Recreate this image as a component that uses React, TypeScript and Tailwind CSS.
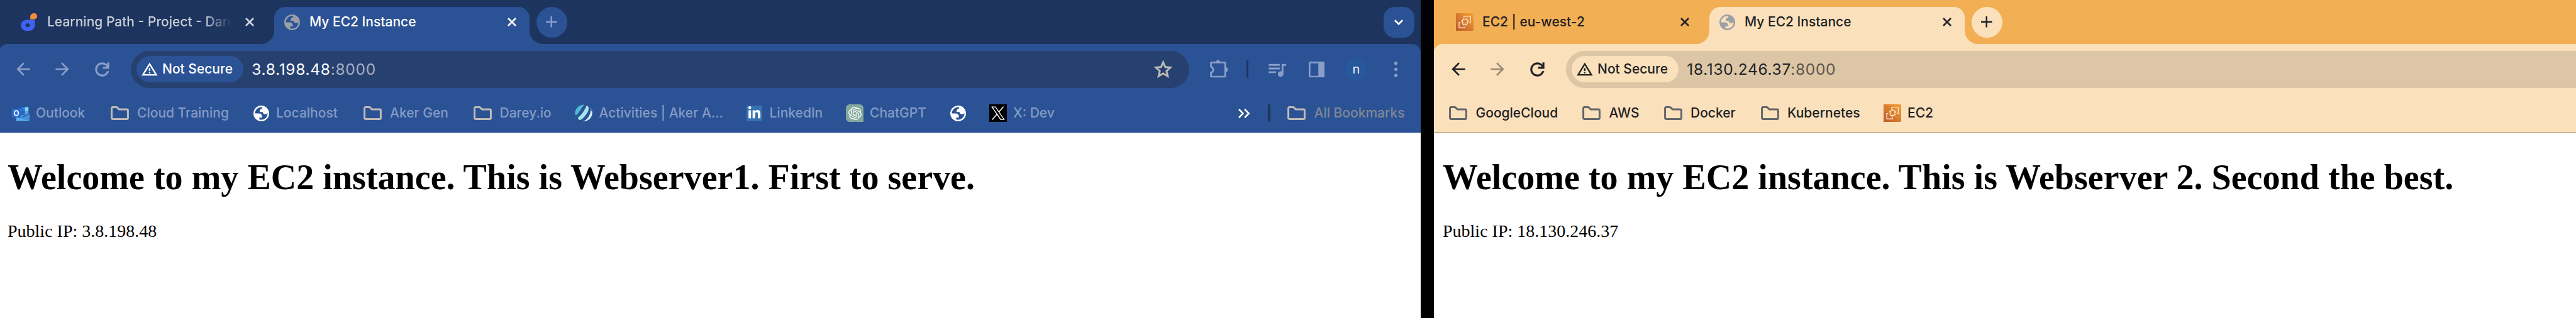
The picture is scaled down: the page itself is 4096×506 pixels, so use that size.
import type { ReactNode } from "react";
import { SiOpenai } from "react-icons/si";
import { FaLinkedinIn } from "react-icons/fa6";

type Theme = {
  strip: string;
  bar: string;
  barText: string;
  field: string;
  line: string;
  tabText: string;
  idleTabText: string;
  idleIcon: string;
  navIcon: string;
  forwardIcon: string;
  plusIcon: string;
  port: string;
  bookmark: string;
  folder: string;
  favicon: string;
};

const blue: Theme = {
  strip: "bg-[#1d345e]",
  bar: "bg-[#2b5295]",
  barText: "text-[#2b5295]",
  field: "bg-[#264170]",
  line: "bg-[#5a78ae]",
  tabText: "text-white",
  idleTabText: "text-[#c8ced8]",
  idleIcon: "text-[#d0d5dd]",
  navIcon: "text-[#899fc8]",
  forwardIcon: "text-[#899fc8]",
  plusIcon: "text-[#899fc8]",
  port: "text-[#a6b0c3]",
  bookmark: "text-[#849bc5]",
  folder: "text-[#bfbbb6]",
  favicon: "text-[#9aa0a6]",
};

const orange: Theme = {
  strip: "bg-[#f2af54]",
  bar: "bg-[#fae0bb]",
  barText: "text-[#fae0bb]",
  field: "bg-[#dcc6a6]",
  line: "bg-[#c6b292]",
  tabText: "text-[#202124]",
  idleTabText: "text-[#202124]",
  idleIcon: "text-[#202124]",
  navIcon: "text-[#202124]",
  forwardIcon: "text-[#9b8c76]",
  plusIcon: "text-[#202124]",
  port: "text-[#5c544b]",
  bookmark: "text-[#202124]",
  folder: "text-[#64666a]",
  favicon: "text-[#9aa0a6]",
};

function Close() {
  return (
    <svg viewBox="0 0 16 16" className="block h-[14px] w-[14px] shrink-0" fill="none" stroke="currentColor" strokeWidth="3">
      <path d="M1.1 1.1 14.9 14.9M14.9 1.1 1.1 14.9" />
    </svg>
  );
}

function Globe({ className }: { className: string }) {
  return (
    <svg viewBox="2 2 20 20" className={`block shrink-0 ${className}`} fill="currentColor">
      <path
        fillRule="evenodd"
        d="M12 2C6.48 2 2 6.48 2 12s4.48 10 10 10 10-4.48 10-10S17.52 2 12 2zM4 12h4.4c3.407.022 4.922 1.73 4.543 5.127H9.488v2.47a8.004 8.004 0 0 0 10.498-8.083C19.327 12.504 18.332 13 17 13c-2.137 0-3.206-.916-3.206-2.75h-3.748c-.274-2.728.683-4.092 2.87-4.092 0-.975.327-1.597.811-1.97A8.004 8.004 0 0 0 4 12z"
      />
    </svg>
  );
}

function Folder() {
  return (
    <svg viewBox="0 0 33 25" className="block h-[22px] w-[29px] shrink-0" fill="none" stroke="currentColor" strokeWidth="3.4" strokeLinejoin="round">
      <path d="M1.8 3.6Q1.8 1.8 3.6 1.8H11.2L15.4 5.8H29.4Q31.2 5.8 31.2 7.6V21.4Q31.2 23.2 29.4 23.2H3.6Q1.8 23.2 1.8 21.4Z" />
    </svg>
  );
}

function DareyLogo() {
  return (
    <svg viewBox="0 0 32 32" className="block h-[28px] w-[28px] shrink-0">
      <path d="M17.3 11V6.2A6.4 6.2 0 0 1 24 0h.6a6.4 5.6 0 0 1 0 11Z" fill="#f08c3c" />
      <path
        fillRule="evenodd"
        fill="#3e63f0"
        d="M25.6 12V22.5A10 9.5 0 0 1 15.6 32H10.5A10.4 10.1 0 0 1 .2 22 10.4 10.1 0 0 1 10.5 12ZM12.7 18.6a4.2 3.4 0 1 0 .01 0Z"
      />
    </svg>
  );
}

function OutlookLogo() {
  return (
    <svg viewBox="0 0 32 32" className="block h-[28px] w-[28px] shrink-0">
      <path d="M9 5H16.5V12H9Z" fill="#2058b4" />
      <path d="M16.5 5H23.5V12H16.5Z" fill="#3676d4" />
      <path d="M23.5 5H30V12H23.5Z" fill="#7fdafd" />
      <path d="M16.5 12H23.5V19H16.5Z" fill="#2f66c4" />
      <path d="M23.5 12H30V19H23.5Z" fill="#57a9ea" />
      <path d="M16 19H30L32 15.5V30H8V24Z" fill="#4690dc" />
      <path d="M8 24V30H32Z" fill="#5fb2ea" />
      <path d="M19 22.5 32 15.5V17L21.5 23.5Z" fill="#2a5aa6" />
      <rect x="0" y="8" width="16.2" height="16.2" rx="1" fill="#2a6fd0" />
      <ellipse cx="8" cy="16" rx="3.6" ry="4.4" fill="none" stroke="#fff" strokeWidth="2.2" />
    </svg>
  );
}

function ActivitiesLogo() {
  return (
    <svg viewBox="0 0 32 32" className="block h-[28px] w-[28px] shrink-0">
      <path d="M17 .2 3.2 20.6Q1.3 21 .4 18.4C-.9 8.6 7.5.6 17 .2Z" fill="#4fb9d2" />
      <path d="M.9 19.8 5.6 17 8.5 20.5 3.2 22.3Z" fill="#216a86" />
      <path d="M21.8 2C25.6 3.6 26.2 8.6 23.4 14 20.6 19.4 14 27.2 9.8 28.6 7.8 28.8 5.8 27.4 5.6 24.6 8 22.6 10.3 20.6 13.5 16.4 17 11.8 18.6 7.6 21.8 2Z" fill="#a9e3ec" />
      <path d="M27.5 4.8C32 9.5 33.4 17 29.4 23.4 26.4 28.2 20.5 31.6 14.8 31 19.5 29.8 23.6 25.8 26.4 20.4 29 15.4 29.4 9.8 27.5 4.8Z" fill="#d3f3f6" />
      <path d="M25.2 2.8C28.6 5 30.6 8.5 31 12.5L29.2 12C29 8.8 27.6 5.2 25.2 2.8Z" fill="#1f5f8d" />
    </svg>
  );
}

function XLogo() {
  return (
    <svg viewBox="0 0 32 32" className="block h-[28px] w-[28px] shrink-0">
      <rect width="32" height="32" fill="#000" />
      <path d="M5 4.8H11.2L26.8 27.4H20.6Z" fill="none" stroke="#fff" strokeWidth="1.5" />
      <path d="M25.8 4.2 17.4 14M5.2 28 14.2 17.7" fill="none" stroke="#fff" strokeWidth="1.7" />
    </svg>
  );
}

function Ec2Logo({ id }: { id: string }) {
  return (
    <svg viewBox="0 0 32 32" className="block h-[28px] w-[28px] shrink-0">
      <defs>
        <linearGradient id={id} x1="0" y1="1" x2="1" y2="0">
          <stop offset="0" stopColor="#bf592a" />
          <stop offset="1" stopColor="#f4a135" />
        </linearGradient>
      </defs>
      <rect width="32" height="32" fill={`url(#${id})`} />
      <g fill="none" stroke="#fdf1e2" strokeWidth="1.3">
        <path d="M14.7 8V5.7H26.6V16.6H24.4M8.2 16.6H5.7V26.4H16.5V23.4" />
        <rect x="12.4" y="11.4" width="8.2" height="8.4" rx=".6" />
        <path strokeWidth="1" d="M14.2 9v2M16.5 9v2M18.8 9v2M14.2 20.2v2M16.5 20.2v2M18.8 20.2v2M10 13.3h2M10 15.6h2M10 17.9h2M21 13.3h2M21 15.6h2M21 17.9h2" />
      </g>
    </svg>
  );
}

function LinkedInLogo() {
  return (
    <span className="flex h-[25px] w-[25px] shrink-0 items-center justify-center bg-[#3572b0] text-white">
      <FaLinkedinIn className="h-[22px] w-[21px]" />
    </span>
  );
}

function ChatGptLogo() {
  return (
    <span className="flex h-[28px] w-[28px] shrink-0 items-center justify-center rounded-[6px] rounded-br-none bg-[#82a99c] text-white">
      <SiOpenai className="h-[21px] w-[21px]" />
    </span>
  );
}

function Flare({ className, flip }: { className: string; flip?: boolean }) {
  return (
    <svg viewBox="0 0 21 21" className={`absolute bottom-0 h-[21px] w-[21px] ${className}`} fill="currentColor">
      <path d={flip ? "M0 0A21 21 0 0 0 21 21H0Z" : "M21 0A21 21 0 0 1 0 21H21Z"} />
    </svg>
  );
}

function TabStrip({ theme, icon, title, clipped, menu }: { theme: Theme; icon: ReactNode; title: string; clipped?: boolean; menu?: boolean }) {
  return (
    <div className={`flex h-[70px] items-start ${theme.strip}`}>
      <div className="flex h-full w-[438px] shrink-0 items-center pl-[35px]">
        {icon}
        <div
          className={`ml-[14px] w-[300px] whitespace-nowrap ${theme.idleTabText} ${
            clipped ? "[mask-image:linear-gradient(to_right,#000_250px,transparent_293px)]" : ""
          }`}
        >
          {title}
        </div>
        <div className={`ml-[15px] ${theme.idleIcon}`}>
          <Close />
        </div>
      </div>
      <div className={`relative mt-[10.5px] flex h-[59.5px] w-[406px] shrink-0 items-center rounded-t-[17.5px] pb-[10.5px] pl-[15.5px] ${theme.bar} ${theme.tabText}`}>
        <Flare className={`-left-[21px] ${theme.barText}`} />
        <Flare flip className={`-right-[21px] ${theme.barText}`} />
        <Globe className={`h-[25px] w-[25px] ${theme.favicon}`} />
        <div className="ml-[15.5px] w-[315px] whitespace-nowrap">My EC2 Instance</div>
        <Close />
      </div>
      <div className={`mt-[10.5px] ml-[10.5px] flex h-[49px] w-[49px] shrink-0 items-center justify-center rounded-full ${theme.bar} ${theme.plusIcon}`}>
        <svg viewBox="0 0 20 20" className="block h-[17.5px] w-[17.5px]" stroke="currentColor" strokeWidth="2.8">
          <path d="M10 0V20M0 10H20" />
        </svg>
      </div>
      {menu && (
        <div className={`mt-[10.5px] mr-[10.5px] ml-auto flex h-[49px] w-[49px] shrink-0 items-center justify-center rounded-[17.5px] text-white ${theme.bar}`}>
          <svg viewBox="0 0 16 10" className="block h-[9px] w-[14px]" fill="none" stroke="currentColor" strokeWidth="3">
            <path d="M1 1.2 8 8.2 15 1.2" />
          </svg>
        </div>
      )}
    </div>
  );
}

function ToolbarIcons() {
  return (
    <div className="flex h-full items-center text-[#899fc8]">
      <svg viewBox="0 0 33.4 33.4" className="ml-[33px] block h-[29px] w-[29px] -translate-y-[1.5px]" fill="none" stroke="currentColor" strokeWidth="3.2">
        <path d="M1.7 14V7.2Q1.7 5.7 3.2 5.7H26.3Q27.8 5.7 27.8 7.2V30.2Q27.8 31.7 26.3 31.7H3.2Q1.7 31.7 1.7 30.2V24.6A5.7 5.7 0 0 0 1.7 13.6" />
        <path d="M10.4 5A4.2 4.4 0 0 1 18.6 5ZM28.5 14.5A4.2 4.2 0 0 1 28.5 22.9Z" fill="currentColor" stroke="none" />
      </svg>
      <span className="ml-[28.5px] block h-[28px] w-[3.5px] rounded-full bg-[#1d345e]" />
      <svg viewBox="0 0 24 24" className="ml-[28px] block h-[35px] w-[35px]" fill="currentColor">
        <path d="M15 6H3v2h12V6zm0 4H3v2h12v-2zM3 16h8v-2H3v2zM17 6v8.18c-.31-.11-.65-.18-1-.18-1.66 0-3 1.34-3 3s1.34 3 3 3 3-1.34 3-3V8h3V6h-5z" />
      </svg>
      <svg viewBox="0 0 29 29" className="ml-[32.5px] block h-[25.5px] w-[25.5px]" fill="none" stroke="currentColor" strokeWidth="3">
        <rect x="1.5" y="1.5" width="26" height="26" rx="1.5" />
        <path d="M17.3 1.5H27V27.5H17.3Z" fill="currentColor" stroke="none" />
      </svg>
      <span className="ml-[33px] flex h-[35px] w-[35px] items-center justify-center rounded-full bg-[#28589c] pb-[1px] text-[20px] font-normal text-[#e9f2fb]">n</span>
      <svg viewBox="0 0 6 28" className="ml-[43px] block h-[24.5px] w-[5.25px]" fill="currentColor">
        <circle cx="3" cy="3" r="3" />
        <circle cx="3" cy="14" r="3" />
        <circle cx="3" cy="25" r="3" />
      </svg>
    </div>
  );
}

function Toolbar({ theme, host, short }: { theme: Theme; host: string; short?: boolean }) {
  return (
    <div className="flex h-[70px] items-start pt-[10.5px]">
      <div className="flex h-[59.5px] w-[210px] shrink-0 items-center pl-[22.5px]">
        <svg viewBox="0 0 24 24" className={`block h-[32px] w-[32px] shrink-0 ${theme.navIcon}`} fill="currentColor">
          <path d="M20 11H7.83l5.59-5.59L12 4l-8 8 8 8 1.41-1.41L7.83 13H20v-2z" />
        </svg>
        <svg viewBox="0 0 24 24" className={`ml-[30.5px] block h-[32px] w-[32px] shrink-0 ${theme.forwardIcon}`} fill="currentColor">
          <path d="M12 4l-1.41 1.41L16.17 11H4v2h12.17l-5.58 5.59L12 20l8-8z" />
        </svg>
        <svg viewBox="0 0 24 24" className={`ml-[31px] block h-[33px] w-[33px] shrink-0 ${theme.navIcon}`} fill="currentColor" stroke="currentColor" strokeWidth=".3">
          <path d="M12 20c-2.23 0-4.13-.77-5.68-2.32C4.77 16.13 4 14.23 4 12s.77-4.13 2.32-5.68S9.77 4 12 4c1.15 0 2.25.24 3.3.71A7.5 7.5 0 0 1 18 6.75V4h2v7h-7V9h4.2a5.8 5.8 0 0 0-2.19-2.2A5.9 5.9 0 0 0 12 6c-1.67 0-3.08.58-4.25 1.75S6 10.33 6 12s.58 3.08 1.75 4.25S10.33 18 12 18c1.28 0 2.44-.37 3.48-1.1A5.9 5.9 0 0 0 17.65 14h2.1c-.47 1.78-1.42 3.22-2.85 4.33S13.85 20 12 20z" />
        </svg>
      </div>
      <div className={`flex h-[59.5px] shrink-0 items-center pl-[8.75px] ${theme.field} ${short ? "w-[1683px] rounded-full" : "w-[1640px] rounded-l-full"}`}>
        <div className={`flex h-[42px] w-[170px] shrink-0 items-center rounded-full pl-[8px] ${theme.bar} ${theme.tabText}`}>
          <svg viewBox="0 0 29.4 24" className="block h-[21px] w-[25.75px] shrink-0 -translate-y-[0.5px]" fill="currentColor">
            <path fillRule="evenodd" d="M14.7 0 29.4 24H0ZM14.7 5.2 5 21.2H24.4Z" />
            <path d="M13.4 10h2.6v5.5h-2.6ZM13.4 17.2h2.6v2.4h-2.6Z" />
          </svg>
          <span className="ml-[7.5px] whitespace-nowrap">Not Secure</span>
        </div>
        <div className={`ml-[13.5px] text-[24.5px] font-normal tracking-[0.7px] whitespace-nowrap ${theme.tabText}`}>
          {host}
          <span className={theme.port}>:8000</span>
        </div>
        {short && (
          <svg viewBox="0 0 24 24" className="mr-[24px] ml-auto block h-[35px] w-[35px] text-[#bfbbb6]" fill="currentColor" stroke="currentColor" strokeWidth=".4">
            <path d="M22 9.24l-7.19-.62L12 2 9.19 8.63 2 9.24l5.46 4.73L5.82 21 12 17.27 18.18 21l-1.63-7.03L22 9.24zM12 15.4l-3.76 2.27 1-4.28-3.32-2.88 4.38-.38L12 6.1l1.71 4.04 4.38.38-3.32 2.88 1 4.28L12 15.4z" />
          </svg>
        )}
      </div>
      {short && <ToolbarIcons />}
    </div>
  );
}

type Bookmark = { label?: string; icon: ReactNode; slot: string; cell: string };

function BookmarkBar({ theme, items, start, all }: { theme: Theme; items: Bookmark[]; start: string; all?: boolean }) {
  return (
    <div className={`flex h-[70px] items-center pt-[10.5px] ${start}`}>
      {items.map((b, i) => (
        <div key={i} className={`flex shrink-0 items-center ${b.cell}`}>
          <div className={`shrink-0 ${b.slot} ${theme.folder}`}>{b.icon}</div>
          {b.label && <span className={`whitespace-nowrap ${theme.bookmark}`}>{b.label}</span>}
        </div>
      ))}
      {all && (
        <div className="ml-auto flex shrink-0 items-center pr-[24.5px]">
          <svg viewBox="0 0 21 17" className="block h-[15px] w-[18.5px] text-white" fill="none" stroke="currentColor" strokeWidth="3">
            <path d="M1.1 1 8.4 8.5 1.1 16M11.5 1 18.8 8.5 11.5 16" />
          </svg>
          <span className="ml-[29px] block h-[28px] w-[3.5px] rounded-full bg-[#1d345e]" />
          <div className={`ml-[27.5px] ${theme.folder}`}>
            <Folder />
          </div>
          <span className="ml-[13.5px] w-[145px] whitespace-nowrap text-[#808894]">All Bookmarks</span>
        </div>
      )}
    </div>
  );
}

function Page({ title, ip }: { title: string; ip: string }) {
  return (
    <div className="pt-[37.5px] pl-[14px] font-['Liberation_Serif',serif] text-black">
      <h1 className="text-[56px] leading-[64px] font-bold tracking-[0.03px] whitespace-nowrap">{title}</h1>
      <p className="mt-[38px] text-[28px] leading-[32px] font-normal whitespace-nowrap">Public IP: {ip}</p>
    </div>
  );
}

const blueBookmarks: Bookmark[] = [
  { label: "Outlook", icon: <OutlookLogo />, slot: "w-[38px]", cell: "w-[157px]" },
  { label: "Cloud Training", icon: <Folder />, slot: "w-[42px]", cell: "w-[227px]" },
  { label: "Localhost", icon: <Globe className="h-[25px] w-[25px] text-white" />, slot: "w-[36px]", cell: "w-[174.5px]" },
  { label: "Aker Gen", icon: <Folder />, slot: "w-[42.5px]", cell: "w-[175px]" },
  { label: "Darey.io", icon: <Folder />, slot: "w-[42px]", cell: "w-[161.5px]" },
  { label: "Activities | Aker A...", icon: <ActivitiesLogo />, slot: "w-[38.5px]", cell: "w-[273px]" },
  { label: "LinkedIn", icon: <LinkedInLogo />, slot: "w-[36.5px]", cell: "w-[158px]" },
  { label: "ChatGPT", icon: <ChatGptLogo />, slot: "w-[38px]", cell: "w-[166px]" },
  { icon: <Globe className="h-[25px] w-[25px] text-white" />, slot: "w-[25px]", cell: "w-[61.5px]" },
  { label: "X: Dev", icon: <XLogo />, slot: "w-[38.5px]", cell: "w-[120px]" },
];

const orangeBookmarks: Bookmark[] = [
  { label: "GoogleCloud", icon: <Folder />, slot: "w-[42.5px]", cell: "w-[211.5px]" },
  { label: "AWS", icon: <Folder />, slot: "w-[43px]", cell: "w-[130px]" },
  { label: "Docker", icon: <Folder />, slot: "w-[42.5px]", cell: "w-[154.5px]" },
  { label: "Kubernetes", icon: <Folder />, slot: "w-[42px]", cell: "w-[194.5px]" },
  { label: "EC2", icon: <Ec2Logo id="ec2-bookmark" />, slot: "w-[38.5px]", cell: "w-[80px]" },
];

export default function App() {
  return (
    <div className="flex h-[506px] w-[4096px] overflow-hidden bg-black font-['Inter',sans-serif] text-[21px] leading-[28px] font-medium">
      <div className="flex h-full w-[2259px] shrink-0 justify-end overflow-hidden">
        <div className="h-full w-[2261px] shrink-0 bg-white">
          <TabStrip theme={blue} icon={<DareyLogo />} title="Learning Path - Project - Dare" clipped menu />
          <div className={blue.strip}>
            <div className={`rounded-t-[14px] ${blue.bar}`}>
              <Toolbar theme={blue} host="3.8.198.48" short />
              <BookmarkBar theme={blue} items={blueBookmarks} start="pl-[21px]" all />
            </div>
          </div>
          <div className={`h-[2px] ${blue.line}`} />
          <Page title="Welcome to my EC2 instance. This is Webserver1. First to serve." ip="3.8.198.48" />
        </div>
      </div>
      <div className="ml-[21px] h-full w-[1816px] shrink-0 overflow-hidden bg-white">
        <TabStrip theme={orange} icon={<Ec2Logo id="ec2-tab" />} title="EC2 | eu-west-2" />
        <div className={orange.strip}>
          <div className={`rounded-tl-[14px] ${orange.bar}`}>
            <Toolbar theme={orange} host="18.130.246.37" />
            <BookmarkBar theme={orange} items={orangeBookmarks} start="pl-[24px]" />
          </div>
        </div>
        <div className={`h-[2px] ${orange.line}`} />
        <Page title="Welcome to my EC2 instance. This is Webserver 2. Second the best." ip="18.130.246.37" />
      </div>
    </div>
  );
}
